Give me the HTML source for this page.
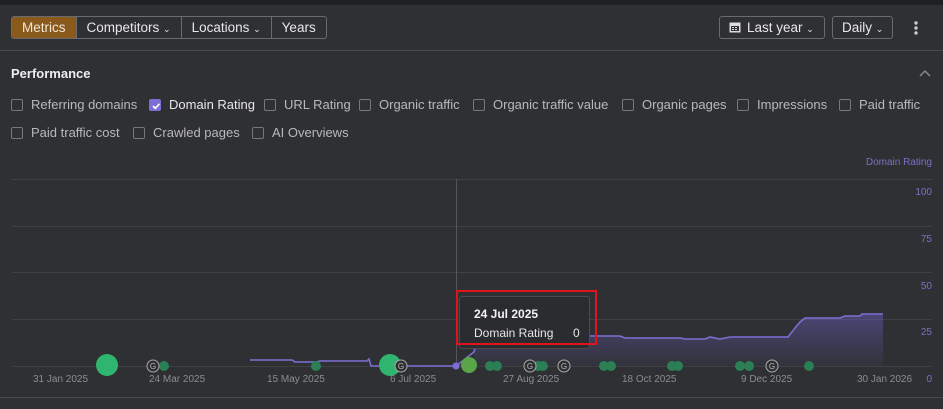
<!DOCTYPE html>
<html><head><meta charset="utf-8"><style>
*{margin:0;padding:0;box-sizing:border-box}
body{width:943px;height:409px;background:#2f3033;font-family:"Liberation Sans",sans-serif;color:#ddd;position:relative;overflow:hidden;font-size:13px}
.top{position:absolute;left:0;top:0;width:943px;height:5px;background:#1f2022}
.seg{position:absolute;top:16px;height:23px;display:flex;border:1px solid #6a6b6f;border-radius:3px;overflow:hidden}
.seg div{padding:0 10px;line-height:21px;border-right:1px solid #6a6b6f;color:#e8e8e8;font-size:13.5px}
.seg div:last-child{border-right:none}
.seg .act{background:#8a5a1c;color:#f2e6d6}
.btn{position:absolute;top:16px;height:23px;border:1px solid #6a6b6f;border-radius:3px;line-height:21px;color:#e8e8e8;font-size:13.5px}
.hr{position:absolute;left:0;width:943px;height:1px;background:#4a4b4f}
.perf{position:absolute;left:11px;top:66px;font-weight:bold;font-size:13px;color:#eee}
.cb{position:absolute;font-size:13px;color:#b8b9bc;white-space:nowrap}
.cb i{display:inline-block;width:12px;height:12px;border:1px solid #77787c;border-radius:2px;vertical-align:-2px;margin-right:8px}
.cb i.on{background:#7b6fd6;border-color:#7b6fd6}
.ax{position:absolute;font-size:10px;color:#8b8c90}
.yl{position:absolute;right:11px;font-size:10px;color:#7a70c8}
</style></head><body>
<div class="top"></div>
<div class="seg" style="left:11px">
<div class="act">Metrics</div><div>Competitors <span style="font-size:9px">&#8964;</span></div><div>Locations <span style="font-size:9px">&#8964;</span></div><div>Years</div></div>
<div class="btn" style="left:719px;width:106px;padding-left:9px"><svg width="12" height="12" style="vertical-align:-1px;margin-right:6px"><rect x="0.5" y="1.5" width="11" height="10" fill="#ddd"/><rect x="2" y="5" width="8" height="5" fill="#2f3033"/><rect x="3" y="6" width="2" height="1" fill="#ddd"/><rect x="6" y="6" width="2" height="1" fill="#ddd"/><rect x="3" y="8" width="2" height="1" fill="#ddd"/><rect x="6" y="8" width="2" height="1" fill="#ddd"/></svg>Last year <span style="font-size:9px">&#8964;</span></div>
<div class="btn" style="left:832px;width:61px;padding-left:9px">Daily <span style="font-size:9px">&#8964;</span></div>
<svg style="position:absolute;left:913px;top:20px" width="6" height="16"><circle cx="3" cy="3" r="1.7" fill="#ccc"/><circle cx="3" cy="8" r="1.7" fill="#ccc"/><circle cx="3" cy="13" r="1.7" fill="#ccc"/></svg>
<div class="hr" style="top:50px"></div>
<div class="perf">Performance</div>
<svg style="position:absolute;left:919px;top:69px" width="12" height="8"><path d="M1 7L6 2L11 7" stroke="#888" stroke-width="1.5" fill="none"/></svg>
<div class="cb" style="left:11px;top:97px"><i></i>Referring domains</div>
<div class="cb" style="left:149px;top:97px;color:#e8e8e8"><i class="on" style="position:relative"><svg style="position:absolute;left:1px;top:1px" width="10" height="10"><path d="M2 5L4.3 7.3L8.5 2.8" stroke="#fff" stroke-width="1.6" fill="none"/></svg></i>Domain Rating</div>
<div class="cb" style="left:264px;top:97px"><i></i>URL Rating</div>
<div class="cb" style="left:359px;top:97px"><i></i>Organic traffic</div>
<div class="cb" style="left:473px;top:97px"><i></i>Organic traffic value</div>
<div class="cb" style="left:622px;top:97px"><i></i>Organic pages</div>
<div class="cb" style="left:737px;top:97px"><i></i>Impressions</div>
<div class="cb" style="left:839px;top:97px"><i></i>Paid traffic</div>
<div class="cb" style="left:11px;top:125px"><i></i>Paid traffic cost</div>
<div class="cb" style="left:133px;top:125px"><i></i>Crawled pages</div>
<div class="cb" style="left:252px;top:125px"><i></i>AI Overviews</div>
<div class="yl" style="top:157px">Domain Rating</div>
<div class="yl" style="top:187px">100</div>
<div class="yl" style="top:234px">75</div>
<div class="yl" style="top:281px">50</div>
<div class="yl" style="top:327px">25</div>
<div class="yl" style="top:374px">0</div>
<svg style="position:absolute;left:0;top:0" width="943" height="409">
<defs><linearGradient id="g" x1="0" y1="0" x2="0" y2="1"><stop offset="0" stop-color="#6d5fc4" stop-opacity=".45"/><stop offset="1" stop-color="#6d5fc4" stop-opacity=".05"/></linearGradient></defs>
<g stroke="#404145" stroke-width="1"><line x1="12" y1="179.5" x2="932" y2="179.5"/><line x1="12" y1="226.5" x2="932" y2="226.5"/><line x1="12" y1="272.5" x2="932" y2="272.5"/><line x1="12" y1="319.5" x2="932" y2="319.5"/><line x1="12" y1="366.5" x2="932" y2="366.5"/></g>
<line x1="456.5" y1="179" x2="456.5" y2="366" stroke="#55565a"/>
<path d="M474 352L478 336L620 336L625 338L680 338L685 339L705 339L710 337L720 339L730 337L788 337L795 328L800 322L805 318L840 318L845 316L860 316L862 314L883 314L883 366L474 366Z" fill="url(#g)"/>
<path d="M250 360L292 360L295 362L316 362L320 361L367 361L369 359L371 366L456 366L474 352L478 336L620 336L625 338L680 338L685 339L705 339L710 337L720 339L730 337L788 337L795 328L800 322L805 318L840 318L845 316L860 316L862 314L883 314" stroke="#7b6fd6" stroke-width="1.6" fill="none"/>
<circle cx="456" cy="366" r="3.5" fill="#7b6fd6"/>
<g fill="#2a7f55"><circle cx="164" cy="366" r="5"/><circle cx="316" cy="366" r="5"/><circle cx="490" cy="366" r="5"/><circle cx="497" cy="366" r="5"/><circle cx="538" cy="366" r="5"/><circle cx="543" cy="366" r="5"/><circle cx="604" cy="366" r="5"/><circle cx="611" cy="366" r="5"/><circle cx="672" cy="366" r="5"/><circle cx="678" cy="366" r="5"/><circle cx="740" cy="366" r="5"/><circle cx="749" cy="366" r="5"/><circle cx="809" cy="366" r="5"/></g>
<circle cx="107" cy="365" r="11" fill="#2fb56f"/>
<circle cx="390" cy="365" r="11" fill="#2fb56f"/>
<circle cx="469" cy="365" r="8" fill="#5aa54a"/>
<g fill="#2f3033" stroke="#aaa" stroke-width="1"><circle cx="153" cy="366" r="6"/><circle cx="401" cy="366" r="6"/><circle cx="530" cy="366" r="6"/><circle cx="564" cy="366" r="6"/><circle cx="772" cy="366" r="6"/></g>
<g font-family="Liberation Sans" font-size="8" fill="#bbb" text-anchor="middle"><text x="153" y="369">G</text><text x="401" y="369">G</text><text x="530" y="369">G</text><text x="564" y="369">G</text><text x="772" y="369">G</text></g>
</svg>
<div class="ax" style="left:33px;top:374px">31 Jan 2025</div>
<div class="ax" style="left:149px;top:374px">24 Mar 2025</div>
<div class="ax" style="left:267px;top:374px">15 May 2025</div>
<div class="ax" style="left:390px;top:374px">6 Jul 2025</div>
<div class="ax" style="left:503px;top:374px">27 Aug 2025</div>
<div class="ax" style="left:622px;top:374px">18 Oct 2025</div>
<div class="ax" style="left:741px;top:374px">9 Dec 2025</div>
<div class="ax" style="left:857px;top:374px">30 Jan 2026</div>
<div style="position:absolute;left:459px;top:296px;width:131px;height:53px;background:#2b2c2f;border:1px solid #4a4b4f;border-radius:3px"></div>
<div style="position:absolute;left:456px;top:290px;width:141px;height:55px;border:2px solid #e0141a"></div>
<div style="position:absolute;left:474px;top:307px;font-weight:bold;font-size:12px;color:#f2f2f2">24 Jul 2025</div>
<div style="position:absolute;left:474px;top:326px;font-size:12px;color:#e6e6e6">Domain Rating</div>
<div style="position:absolute;left:573px;top:326px;font-size:12px;color:#e6e6e6">0</div>
<div class="hr" style="top:397px"></div>
</body></html>
